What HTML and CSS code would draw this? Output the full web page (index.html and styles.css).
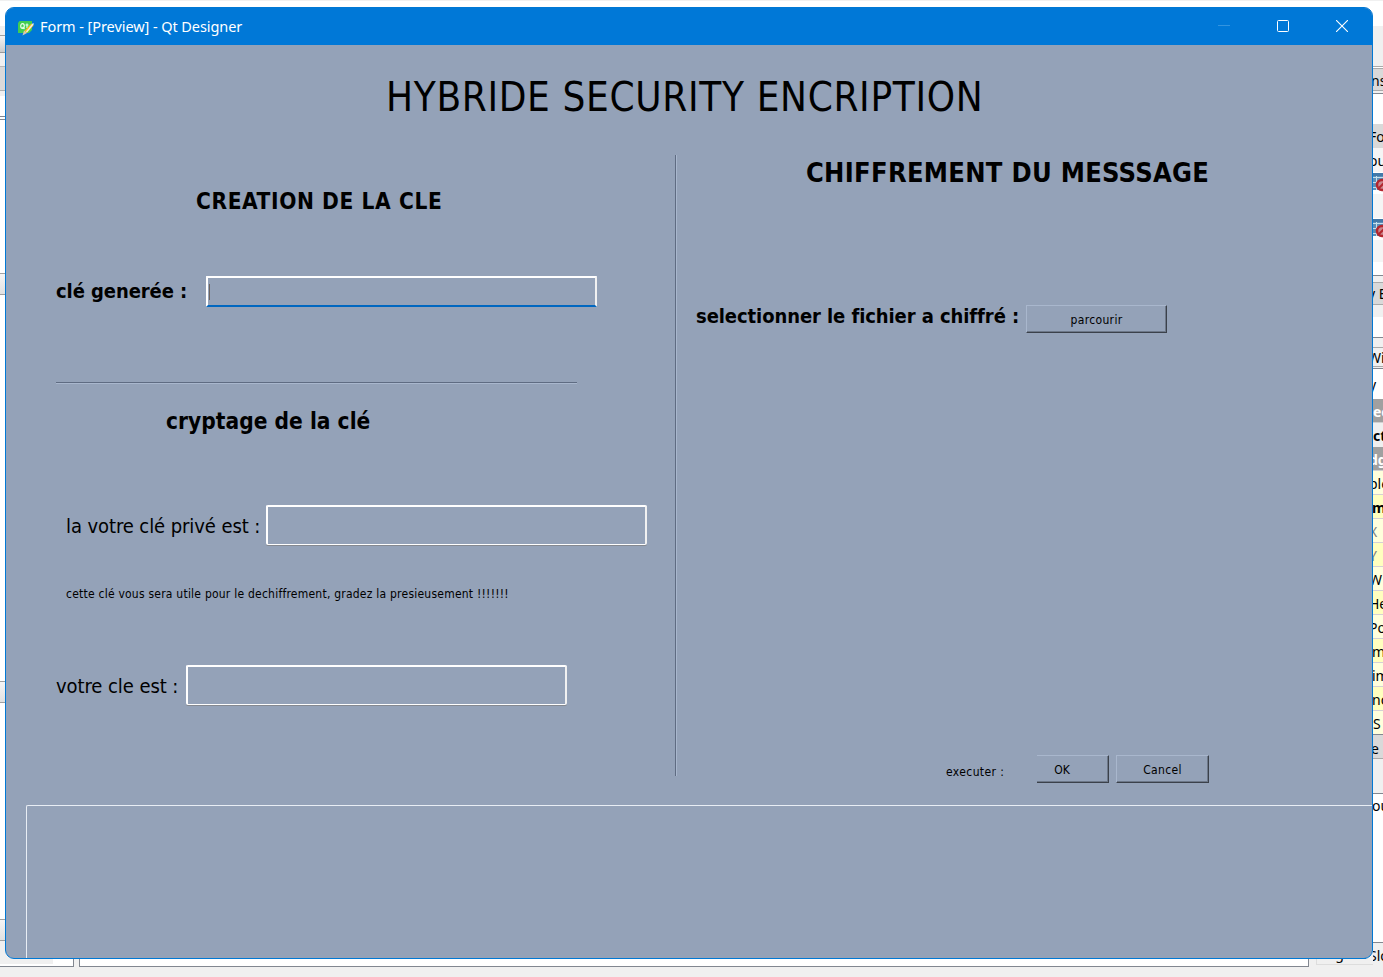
FILE: index.html
```html
<!DOCTYPE html>
<html lang="fr">
<head>
<meta charset="utf-8">
<title>Form - [Preview] - Qt Designer</title>
<link rel="stylesheet" href="styles.css">
</head>
<body>
<div class="desktop">
  <div class="backdrop">
    <div class="strip-left">
      <i class="l-top"></i><i class="l-tool"></i><i class="l-gap"></i><i class="l-head"></i><i class="l-gap2"></i><i class="l-list"></i><i class="l-btn"></i><i class="l-mid"></i><i class="l-btn"></i><i class="l-low"></i><i class="l-btn"></i><i class="l-end"></i>
    </div>
    <div class="strip-right">
      <div class="r h26 menu"></div>
      <div class="r h40 face"></div>
      <div class="r h27 dock"><span class="in3">ns</span></div>
      <div class="r h31 white"></div>
      <div class="r h24 head"><span class="in4">Fo</span></div>
      <div class="r h24 alt"><span class="in4">ou</span></div>
      <div class="r h22 white"><svg width="10" height="22" viewBox="0 0 10 22"><path fill="#5b8fb8" d="M0 1h10v17H0z"/><path fill="#4379a8" d="M0 1h10v3H0z"/><path stroke="#c4e0ed" d="M0 5.500h10M0 10.500h10M0 15.500h10M3.500 4v14"/><circle cx="9" cy="13" r="5" fill="#c98a90" stroke="#b3262e" stroke-width="2.500"/><path stroke="#b3262e" stroke-width="2" d="M6 16l6-6"/></svg></div>
      <div class="r h24 alt"></div>
      <div class="r h22 white"><svg width="10" height="22" viewBox="0 0 10 22"><path fill="#5b8fb8" d="M0 1h10v17H0z"/><path fill="#4379a8" d="M0 1h10v3H0z"/><path stroke="#c4e0ed" d="M0 5.500h10M0 10.500h10M0 15.500h10M3.500 4v14"/><circle cx="9" cy="13" r="5" fill="#c98a90" stroke="#b3262e" stroke-width="2.500"/><path stroke="#b3262e" stroke-width="2" d="M6 16l6-6"/></svg></div>
      <div class="r h22 alt"></div>
      <div class="r h14 white line"></div>
      <div class="r h29 dock2"><span class="in5">y&nbsp;E</span></div>
      <div class="r h12 face"></div>
      <div class="r h21 white line"></div>
      <div class="r h31b field"><span class="in5">Wi</span></div>
      <div class="r h30 white"><span class="in4">y</span></div>
      <div class="r h24 group"><span class="in0">ec</span></div>
      <div class="r h24 face bold"><span class="in0">ct</span></div>
      <div class="r h24 group"><span class="in4">dg</span></div>
      <div class="r h24 pale"><span class="in4">ple</span></div>
      <div class="r h24 deep bold"><span class="in1">m</span></div>
      <div class="r h24 pale dim"><span class="in4">X</span></div>
      <div class="r h24 deep dim"><span class="in4">Y</span></div>
      <div class="r h24 pale"><span class="in4">W</span></div>
      <div class="r h24 deep"><span class="in4">He</span></div>
      <div class="r h24 pale"><span class="in4">Po</span></div>
      <div class="r h24 deep"><span class="in1">m</span></div>
      <div class="r h24 pale"><span class="in1">im</span></div>
      <div class="r h24 deep"><span class="in1">nc</span></div>
      <div class="r h24 pale line"><span class="in0">S</span></div>
      <div class="r h24 dock3"><span class="in3">e</span></div>
      <div class="r h34 face line"></div>
      <div class="r h149 white line"><span class="in1">ou</span></div>
      <div class="r h24 face"><span class="in4">Slo</span></div>
    </div>
    <div class="strip-bottom"><i class="b1"></i><i class="b2"></i><div class="b3"><span>Signal/</span></div></div>
  </div>

  <main class="window">
    <header class="titlebar">
      <svg class="logo" width="18" height="16" viewBox="0 0 18 16"><path fill="#41cd52" d="M2.500 1H15v9l-3 3H1V3z"/><g fill="none" stroke="#e8ffe8" stroke-width="1.200"><ellipse cx="5.500" cy="6" rx="1.800" ry="2.300"/><path d="M5.500 7l2 2M10 3.500V8M8.500 5h3"/></g><path stroke="#ffbf16" stroke-width="3.200" d="M15.500 4.500l-7 7.500"/><path stroke="#e7eef2" stroke-width="1.200" d="M16.500 3.500l-7 8.500"/><path fill="#d9c7b2" d="M7 10.500l3 2.500-4.500 2.500z"/></svg>
      <span class="caption">Form - [Preview] - Qt Designer</span>
      <div class="controls">
        <svg width="12" height="12" viewBox="0 0 12 12"><path stroke="#3294e0" d="M0 5.500h12"/></svg>
        <svg width="12" height="12" viewBox="0 0 12 12"><rect x=".5" y=".5" width="11" height="11" rx="1" fill="none" stroke="#fff"/></svg>
        <svg width="12" height="12" viewBox="0 0 12 12"><path stroke="#fff" stroke-width="1.100" d="M0 0l12 12M12 0L0 12"/></svg>
      </div>
    </header>
    <h1 class="heading"><span>HYBRIDE SECURITY ENCRIPTION</span></h1>
    <div class="columns">
      <section class="left">
        <h2 class="create">CREATION DE LA CLE</h2>
        <div class="row generated"><label>clé generée :</label><div class="input focused"><i class="caret"></i></div></div>
        <div class="hline"></div>
        <h2 class="crypt">cryptage de la clé</h2>
        <div class="row private"><label>la votre clé privé est :</label><div class="input"></div></div>
        <p class="note">cette clé vous sera utile pour le dechiffrement, gradez la presieusement !!!!!!!</p>
        <div class="row yours"><label>votre cle est :</label><div class="input"></div></div>
      </section>
      <div class="vline"></div>
      <section class="right">
        <h2 class="message">CHIFFREMENT DU MESSSAGE</h2>
        <div class="row choose"><label>selectionner le fichier a chiffré :</label><button class="browse">parcourir</button></div>
        <div class="row run"><label>executer :</label><button class="ok">OK</button><button class="cancel">Cancel</button></div>
      </section>
    </div>
    <div class="output"></div>
  </main>
</div>
</body>
</html>
```
FILE: styles.css
```css
* { box-sizing: border-box; }
body { margin: 0; font-family: "DejaVu Sans Condensed", "DejaVu Sans", sans-serif; font-stretch: condensed; color: #000; }
h1, h2, p { margin: 0; font-weight: 400; white-space: nowrap; }
i { display: block; }
.desktop { position: relative; width: 1383px; height: 977px; overflow: hidden; background: #f0f0f0; }

/* designer window visible around the edges */
.backdrop { display: grid; grid-template: 966px 11px / 6px 1fr 10px; width: 1383px; height: 977px; background: linear-gradient(#f0f0f0 1px, #fff 1px, #fff 26px, #f0f0f0 26px); }
.strip-left { grid-area: 1 / 1; }
.l-top { height: 36px; border-bottom: 1px solid #a0a0a0; background: linear-gradient(#f0f0f0 1px, #fff 1px 26px, #f0f0f0 26px); }
.l-tool { height: 17px; background: linear-gradient(#f4f4f4, #ccc); border-bottom: 1px solid #999; }
.l-gap { height: 14px; border-bottom: 1px solid #b8b8b8; background: #f0f0f0; }
.l-head { height: 24px; background: #d9d9d9; border-bottom: 1px solid #b0b0b0; }
.l-gap2 { height: 29px; background: linear-gradient(#f0f0f0 5px, #fff 5px 25px, #828790 25px 26px, #fff 26px 28px, #828790 28px); }
.l-list { height: 153px; background: #fff; }
.l-btn { height: 22px; border: solid #a0a0a0; border-width: 1px 0; background: linear-gradient(#f5f5f5, #e1e1e1); }
.l-mid { height: 386px; background: #fff; }
.l-low { height: 216px; background: #fff; }
.l-end { height: 25px; background: #f0f0f0; }
.strip-right { grid-area: 1 / 3; width: 10px; overflow: hidden; font: 14px/26px "Noto Sans", sans-serif; }
.r { width: 10px; overflow: hidden; white-space: nowrap; }
.r svg { display: block; }
.h12 { height: 12px; } .h14 { height: 14px; } .h21 { height: 21px; } .h22 { height: 22px; }
.h24 { height: 24px; } .h26 { height: 26px; } .h27 { height: 28px; } .h29 { height: 29px; }
.h30 { height: 30px; line-height: 32px; } .h31 { height: 30px; } .h31b { height: 31px; line-height: 39px; }
.h34 { height: 35px; } .h40 { height: 40px; } .h149 { height: 149px; line-height: 24px; }
.menu { background: linear-gradient(#f0f0f0 1px, #fff 1px); }
.face { background: #f0f0f0; } .white { background: #fff; } .alt { background: #f5f5f5; }
.head { background: #d9d9d9; }
.dock { line-height: 29px; background: linear-gradient(#aaa 1px, #fff 1px 2px, #aaa 2px 3px, #d9d9d9 3px 24px, #aaa 24px 25px, #f0f0f0 25px 27px, #828790 27px); }
.dock2 { line-height: 36px; background: linear-gradient(#f0f0f0 6px, #aaa 6px 7px, #d9d9d9 7px 28px, #aaa 28px); }
.dock3 { line-height: 28px; background: #d9d9d9; border-bottom: 1px solid #aaa; }
.field { background: linear-gradient(#f0f0f0 9px, #aaa 9px 10px, #f0f0f0 10px 28px, #aaa 28px 29px, #f0f0f0 29px 30px, #828790 30px); }
.line { border-bottom: 1px solid #828790; }
.pale, .deep { border-bottom: 1px solid #d4d0d4; }
.pale { background: #ffffdc; } .deep { background: #ffffbf; }
.pale.line { border-bottom: 1px solid #828790; }
.dim { color: #808080; }
.group { background: #a0a0a0; color: #fff; font-weight: 700; border-bottom: 1px solid #d0d0d0; }
.bold { font-weight: 700; }
.in1 { margin-left: -1px; } .in3 { margin-left: -2px; } .in4 { margin-left: -4px; } .in5 { margin-left: -5px; }
.strip-bottom { grid-area: 2 / 1 / 3 / 4; display: flex; width: 1373px; height: 19px; margin-top: -8px; }
.b1, .b2, .b3 { flex: none; }
.b1 { width: 74px; height: 9px; background: #f0f0f0; border: solid #828790; border-width: 0 1px 1px 0; box-shadow: inset -20px -2px #fff; }
.b2 { width: 1230px; height: 9px; margin-left: 5px; background: #f0f0f0; border: solid #828790; border-width: 0 1px 1px; box-shadow: inset 0 -2px #fff; }
.b2 { background: #fff; }
.b3 { display: flex; align-items: flex-end; width: 57px; height: 7px; margin-left: 7px; padding-left: 7px; overflow: hidden; border: solid #ddd; border-width: 0 0 1px 1px; font: 14px/20px "Noto Sans", sans-serif; }

/* preview window */
.window { position: absolute; left: 5px; top: 7px; width: 1368px; height: 952px; border: 1px solid #0078d4; border-radius: 9px; overflow: hidden; background: #94a2b8; }
.titlebar { display: flex; align-items: center; height: 37px; padding: 0 24px 0 11px; background: #0078d7; color: #fff; }
.logo { margin-top: 2px; }
.caption { margin: -1px 0 0 5px; font: 14.5px/20px "Noto Sans", sans-serif; letter-spacing: -.07px; white-space: nowrap; }
.controls { display: flex; gap: 47px; margin: -1px 0 0 auto; }
.controls svg { display: block; }
.heading { height: 110px; padding: 27px 0 0 380px; font-size: 40px; line-height: 50px; letter-spacing: .67px; }
.columns { display: grid; grid-template: 621px / 669px 2px 1fr; height: 621px; }
.vline { border-left: 1px solid #5f6c82; border-right: 1px solid #a9b7cd; }
h2 { font-weight: 700; font-size: 22.5px; line-height: 30px; }
.row { display: flex; }
.row label { white-space: nowrap; flex: none; font-size: 20px; line-height: 26px; }
.left { padding-top: 31px; }
.create { margin-left: 190px; letter-spacing: .6px; }
.generated { margin: 60px 0 0 50px; }
.generated label { width: 150px; padding-top: 2px; font-weight: 700; letter-spacing: -.08px; }
.input { border: 2px solid #fff; border-color: #fff #f1f1f1 #fff #fff; border-radius: 2px; border-bottom: 1px solid #fff; box-shadow: 0 1px #858990; width: 381px; height: 40px; }
.input.focused { width: 391px; height: 31px; border-bottom: 2px solid #0067c0; box-shadow: none; border-radius: 1px; }
.caret { width: 1px; height: 16px; margin: 6px 0 0 1px; background: #6b625f; }
.hline { width: 521px; height: 2px; margin: 75px 0 0 50px; border-top: 1px solid #5f6c82; border-bottom: 1px solid #a9b7cd; }
.crypt { margin: 22px 0 0 160px; letter-spacing: .03px; }
.private { margin: 69px 0 0 60px; }
.private label { width: 200px; padding-top: 8px; letter-spacing: -.09px; }
.note { height: 20px; margin: 39px 0 0 60px; font-size: 12px; line-height: 20px; letter-spacing: .23px; }
.yours { margin: 61px 0 0 50px; }
.yours label { width: 130px; padding-top: 8px; letter-spacing: -.07px; }
.message { margin-left: 129px; padding-top: 1px; font-size: 27px; line-height: 34px; letter-spacing: .3px; }
.choose { margin: 115px 0 0 19px; }
.choose label { width: 330px; margin-top: -2px; font-weight: 700; letter-spacing: -.08px; }
button { height: 28px; padding: 1px 0 0; border: 1px solid; border-color: #a9b7cd #3b414a #3b414a #a9b7cd; box-shadow: inset -1px -1px #6d7889; background: #94a2b8; color: #000; font-family: inherit; font-stretch: condensed; font-size: 12px; letter-spacing: .35px; }
.browse { width: 141px; }
.run { margin: 422px 0 0 269px; }
.run label { width: 91px; padding-top: 4px; font-size: 12px; letter-spacing: .4px; }
.ok { width: 72px; border-left: 0; padding-right: 21px; margin-right: 7px; letter-spacing: 0; }
.cancel { width: 93px; }
.output { height: 153px; margin: 29px 0 0 20px; border: solid #e8edf4; border-width: 1px 0 0 1px; border-top-left-radius: 2px; }
```
